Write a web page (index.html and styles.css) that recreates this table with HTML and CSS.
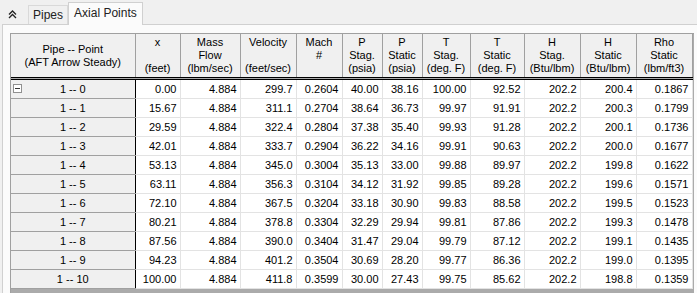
FILE: index.html
```html
<!DOCTYPE html>
<html>
<head>
<meta charset="utf-8">
<link rel="stylesheet" href="styles.css">
</head>
<body>
<div class="tabbar">
  <div class="collapse-btn">
    <svg width="9" height="9" viewBox="0 0 9 9"><path d="M1 4.5 L4.5 1 L8 4.5 M1 8 L4.5 4.5 L8 8" fill="none" stroke="#222" stroke-width="1.3"/></svg>
  </div>
  <div class="tab">Pipes</div>
  <div class="tab active">Axial Points</div>
</div>
<div class="panel">
  <div class="grid">
    <table>
      <colgroup>
        <col class="c0"><col class="c45"><col class="c60"><col class="c56"><col class="c46"><col class="c40"><col class="c40"><col class="c48"><col class="c54"><col class="c56"><col class="c56"><col class="c56">
      </colgroup>
      <thead>
        <tr>
          <th class="rowhead-h">Pipe -- Point<br>(AFT Arrow Steady)</th>
          <th>x<br>&nbsp;<br>(feet)</th>
          <th>Mass<br>Flow<br>(lbm/sec)</th>
          <th>Velocity<br>&nbsp;<br>(feet/sec)</th>
          <th>Mach<br>#<br>&nbsp;</th>
          <th>P<br>Stag.<br>(psia)</th>
          <th>P<br>Static<br>(psia)</th>
          <th>T<br>Stag.<br>(deg. F)</th>
          <th>T<br>Static<br>(deg. F)</th>
          <th>H<br>Stag.<br>(Btu/lbm)</th>
          <th>H<br>Static<br>(Btu/lbm)</th>
          <th>Rho<br>Static<br>(lbm/ft3)</th>
        </tr>
      </thead>
      <tbody>
        <tr><td class="rh"><span class="minus-box"></span>1 -- 0</td><td>0.00</td><td>4.884</td><td>299.7</td><td>0.2604</td><td>40.00</td><td>38.16</td><td>100.00</td><td>92.52</td><td>202.2</td><td>200.4</td><td>0.1867</td></tr>
        <tr><td class="rh">1 -- 1</td><td>15.67</td><td>4.884</td><td>311.1</td><td>0.2704</td><td>38.64</td><td>36.73</td><td>99.97</td><td>91.91</td><td>202.2</td><td>200.3</td><td>0.1799</td></tr>
        <tr><td class="rh">1 -- 2</td><td>29.59</td><td>4.884</td><td>322.4</td><td>0.2804</td><td>37.38</td><td>35.40</td><td>99.93</td><td>91.28</td><td>202.2</td><td>200.1</td><td>0.1736</td></tr>
        <tr><td class="rh">1 -- 3</td><td>42.01</td><td>4.884</td><td>333.7</td><td>0.2904</td><td>36.22</td><td>34.16</td><td>99.91</td><td>90.63</td><td>202.2</td><td>200.0</td><td>0.1677</td></tr>
        <tr><td class="rh">1 -- 4</td><td>53.13</td><td>4.884</td><td>345.0</td><td>0.3004</td><td>35.13</td><td>33.00</td><td>99.88</td><td>89.97</td><td>202.2</td><td>199.8</td><td>0.1622</td></tr>
        <tr><td class="rh">1 -- 5</td><td>63.11</td><td>4.884</td><td>356.3</td><td>0.3104</td><td>34.12</td><td>31.92</td><td>99.85</td><td>89.28</td><td>202.2</td><td>199.6</td><td>0.1571</td></tr>
        <tr><td class="rh">1 -- 6</td><td>72.10</td><td>4.884</td><td>367.5</td><td>0.3204</td><td>33.18</td><td>30.90</td><td>99.83</td><td>88.58</td><td>202.2</td><td>199.5</td><td>0.1523</td></tr>
        <tr><td class="rh">1 -- 7</td><td>80.21</td><td>4.884</td><td>378.8</td><td>0.3304</td><td>32.29</td><td>29.94</td><td>99.81</td><td>87.86</td><td>202.2</td><td>199.3</td><td>0.1478</td></tr>
        <tr><td class="rh">1 -- 8</td><td>87.56</td><td>4.884</td><td>390.0</td><td>0.3404</td><td>31.47</td><td>29.04</td><td>99.79</td><td>87.12</td><td>202.2</td><td>199.1</td><td>0.1435</td></tr>
        <tr><td class="rh">1 -- 9</td><td>94.23</td><td>4.884</td><td>401.2</td><td>0.3504</td><td>30.69</td><td>28.20</td><td>99.77</td><td>86.36</td><td>202.2</td><td>199.0</td><td>0.1395</td></tr>
        <tr><td class="rh">1 -- 10</td><td>100.00</td><td>4.884</td><td>411.8</td><td>0.3599</td><td>30.00</td><td>27.43</td><td>99.75</td><td>85.62</td><td>202.2</td><td>198.8</td><td>0.1359</td></tr>
      </tbody>
    </table>
  </div>
</div>
</body>
</html>
```

FILE: styles.css
```css
html, body {
  margin: 0;
  padding: 0;
  height: 100%;
  overflow: hidden;
}
body {
  background: #f0f0f0;
  font-family: "Liberation Sans", Arial, sans-serif;
  color: #000;
}
.tabbar {
  height: 24px;
  display: flex;
  align-items: flex-end;
}
.collapse-btn {
  width: 28px;
  height: 24px;
  display: flex;
  align-items: center;
  justify-content: center;
  box-sizing: border-box;
  padding-top: 5px;
}
.collapse-btn svg { display: block; margin-left: -4px; }
.tab {
  height: 19px;
  box-sizing: border-box;
  border: 1px solid #d9d9d9;
  border-bottom: none;
  padding: 0 4px;
  font-size: 12px;
  line-height: 19px;
  color: #222;
  background: #f0f0f0;
}
.tab.active {
  height: 23px;
  margin-bottom: -1px;
  padding: 0 5px;
  line-height: 20px;
  background: #fbfbfb;
  border-color: #d0d0d0;
  position: relative;
  z-index: 1;
}
.panel {
  margin-left: 2px;
  border-top: 1px solid #d0d0d0;
  border-left: 1px solid #d0d0d0;
  background: #fbfbfb;
  padding: 8px 0 0 7px;
  height: 260px;
}
.grid {
  width: 684px;
  height: 260px;
  overflow: hidden;
  box-sizing: border-box;
  background: #ababab;
  border-left: 1px solid #a0a0a0;
  border-top: 1px solid #a0a0a0;
}
table {
  border-collapse: collapse;
  table-layout: fixed;
  width: 681px;
  font-size: 11px;
}
col.c0 { width: 124px; }
col.c45 { width: 45px; }
col.c60 { width: 60px; }
col.c56 { width: 56px; }
col.c46 { width: 46px; }
col.c40 { width: 40px; }
col.c48 { width: 48px; }
col.c54 { width: 54px; }
th {
  height: 43px;
  padding: 0;
  background: #f0f0f0;
  font-weight: normal;
  line-height: 13px;
  text-align: center;
  vertical-align: middle;
  border-right: 1px solid #a0a0a0;
  border-bottom: 3px double #000;
  white-space: nowrap;
  overflow: hidden;
}
td {
  height: 18px;
  padding: 0 3px 0 0;
  background: #fff;
  text-align: right;
  vertical-align: middle;
  line-height: 13px;
  border-right: 1px solid #e3e3e3;
  border-bottom: 1px solid #e3e3e3;
  white-space: nowrap;
  overflow: hidden;
}
td.rh {
  position: relative;
  padding: 0;
  text-align: center;
  background: #f0f0f0;
  border-right: 1px solid #000;
  border-bottom: 1px solid #a0a0a0;
}
.minus-box {
  position: absolute;
  left: 2px;
  top: 4px;
  width: 7px;
  height: 7px;
  border: 1px solid #909090;
  background: #fff;
}
.minus-box::after {
  content: "";
  position: absolute;
  left: 1px;
  top: 3px;
  width: 5px;
  height: 1px;
  background: #333;
}
```
